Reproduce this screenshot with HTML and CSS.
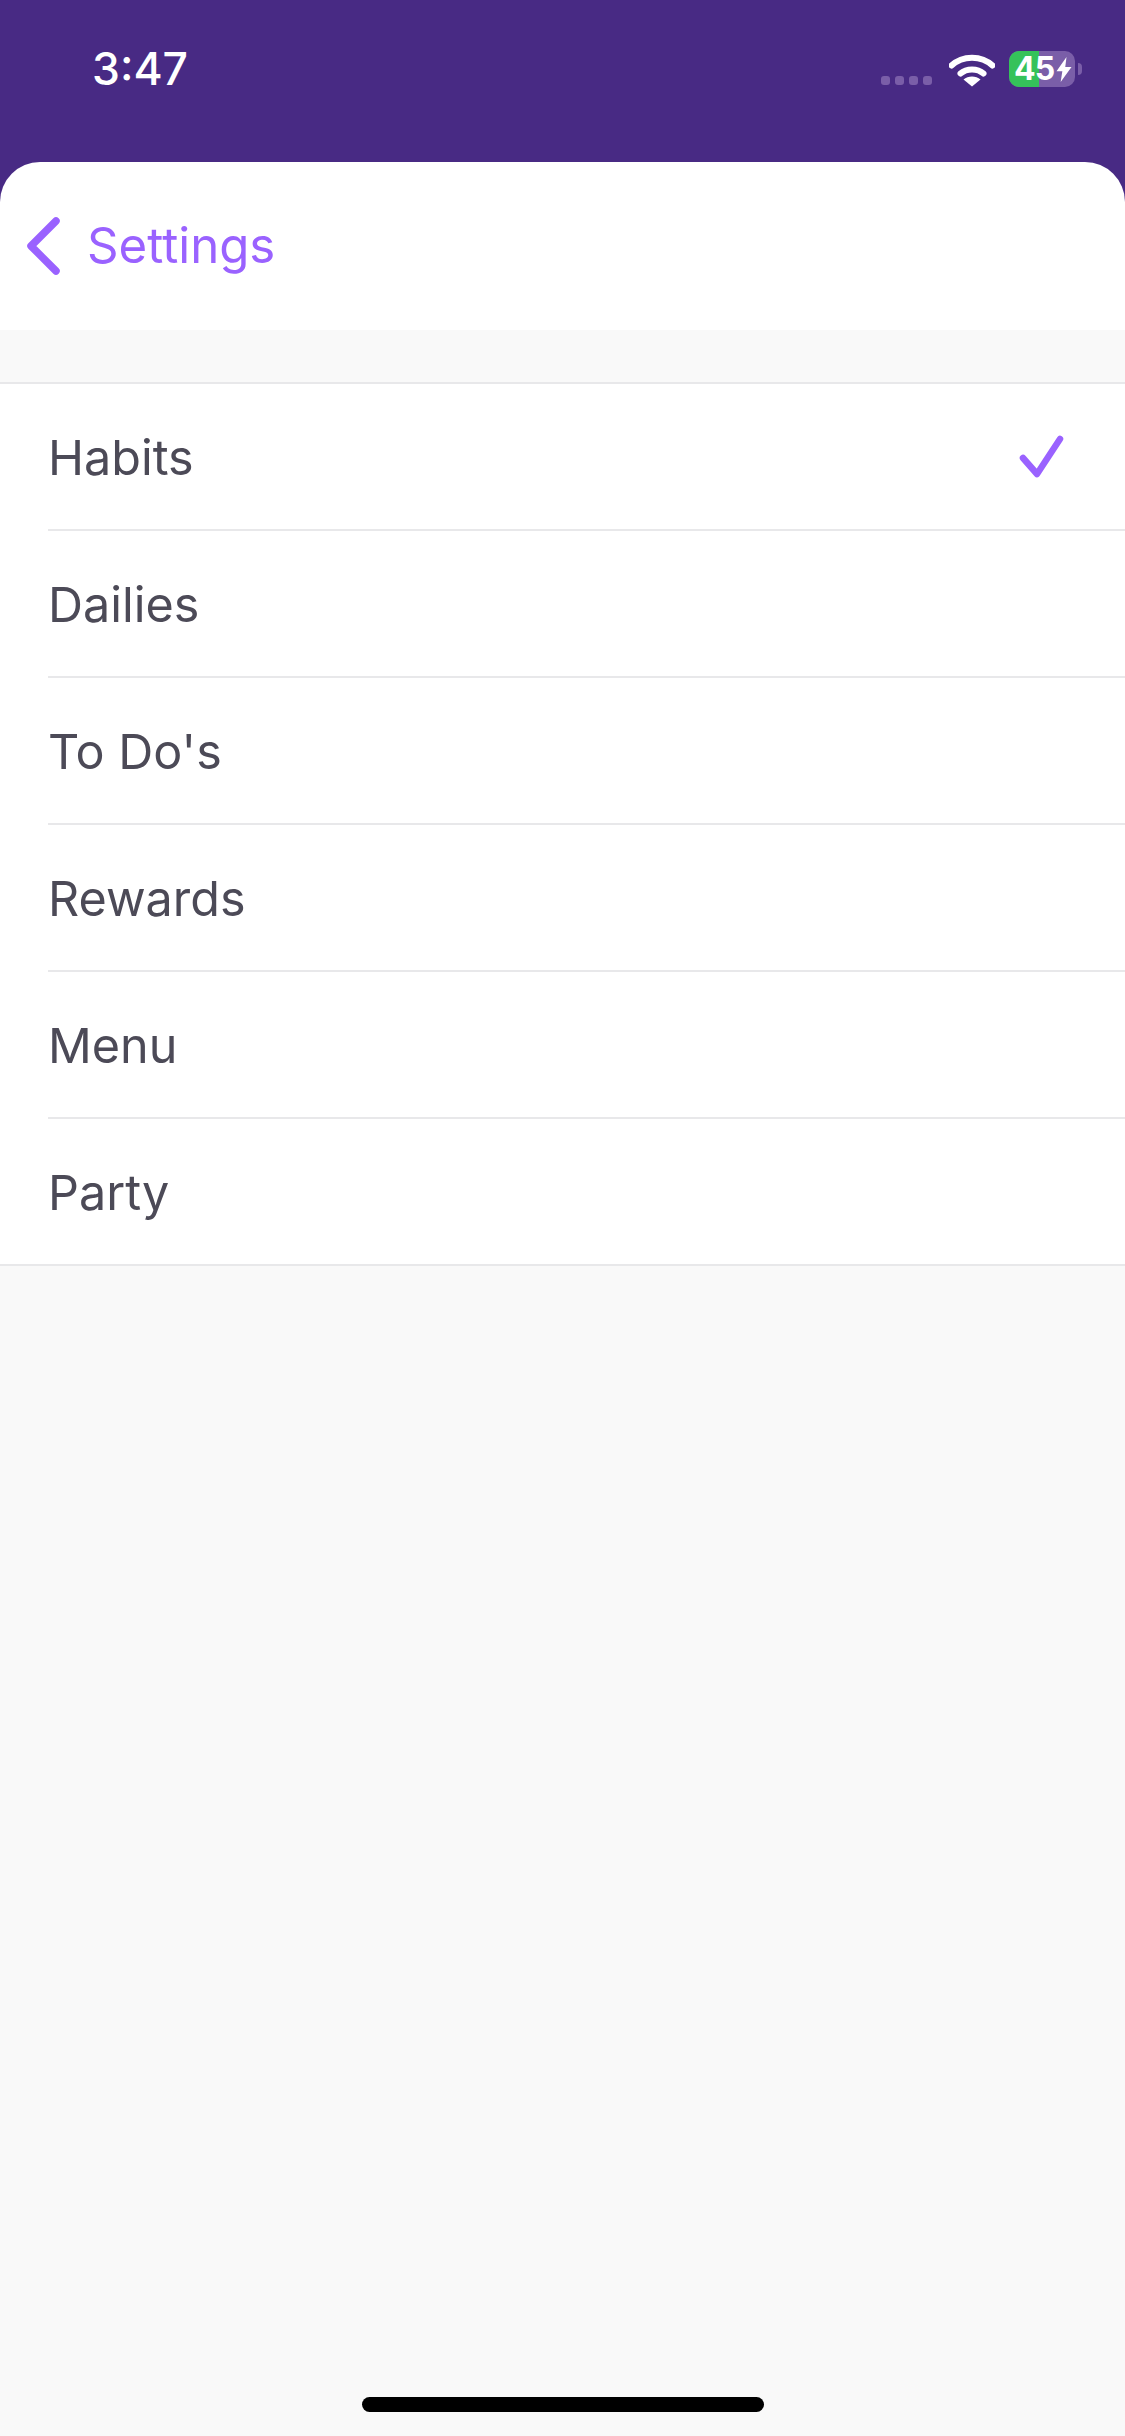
FILE: index.html
```html
<!DOCTYPE html>
<html lang="en">
<head>
    <meta charset="UTF-8">
    <meta name="viewport" content="width=device-width, initial-scale=1.0">
    <title>Launch Screen</title>
    <link rel="stylesheet" href="styles.css">
</head>
<body>
    <header class="top">
        <div class="status">
            <div class="time">3:47</div>
            <div class="status-right">
                <div class="signal">
                    <span></span><span></span><span></span><span></span>
                </div>
                <svg class="wifi" viewBox="0 0 46 34" width="46" height="34">
                    <path d="M2.5 12.5C13.5 2 32.5 2 43.5 12.5" fill="none" stroke="#fff" stroke-width="6" stroke-linecap="round"/>
                    <path d="M11.5 20.5C17.5 15 28.500 15 34.500 20.500" fill="none" stroke="#fff" stroke-width="6" stroke-linecap="round"/>
                    <path d="M23 33.500L14.500 26.500C19 22.500 27 22.500 31.500 26.500Z" fill="#fff"/>
                </svg>
                <div class="battery">
                    <div class="battery-fill"></div>
                    <span class="battery-text">45</span>
                    <svg class="bolt" viewBox="0 0 18 30" width="16" height="25">
                        <path d="M12 0L0 17H7L5 30L18 12H10.500Z" fill="#fff"/>
                    </svg>
                    <div class="battery-nub"></div>
                </div>
            </div>
        </div>
        <!-- Back bar -->
        <nav class="navbar">
            <svg class="back" viewBox="0 0 36 60" width="36" height="60">
                <path d="M31 5L6 30L31 55" fill="none" stroke="#9a62ff" stroke-width="7.500" stroke-linecap="round" stroke-linejoin="round"/>
            </svg>
            <span class="back-label">Settings</span>
        </nav>
    </header>

    <ul class="list">
        <li class="row">
            <div class="row-inner">
                <span class="row-label">Habits</span>
                <svg class="check" viewBox="0 0 48 48" width="48" height="48">
                    <path d="M6 25L20 41L43 6" fill="none" stroke="#9a62ff" stroke-width="6.500" stroke-linecap="round" stroke-linejoin="round"/>
                </svg>
            </div>
        </li>
        <li class="row"><div class="row-inner"><span class="row-label">Dailies</span></div></li>
        <li class="row"><div class="row-inner"><span class="row-label">To Do's</span></div></li>
        <li class="row"><div class="row-inner"><span class="row-label">Rewards</span></div></li>
        <li class="row"><div class="row-inner"><span class="row-label">Menu</span></div></li>
        <li class="row"><div class="row-inner"><span class="row-label">Party</span></div></li>
    </ul>

    <div class="home-bar"></div>
</body>
</html>
```

FILE: styles.css
```css
* {
  margin: 0;
  padding: 0;
  box-sizing: border-box;
}

body {
  width: 1125px;
  height: 2436px;
  display: flex;
  flex-direction: column;
  font-family: Inter, "Liberation Sans", sans-serif;
  background-color: #f9f9f9;
  overflow: hidden;
}

.top {
  background: linear-gradient(#482a84 0%, #482a84 80%, #452880 100%);
}

.status {
  height: 162px;
  display: flex;
  justify-content: space-between;
  padding: 45px 50px 0 92px;
}

.time {
  color: #fff;
  font-size: 44.500px;
  font-weight: 550;
  line-height: 49px;
}

.status-right {
  display: flex;
  align-items: flex-start;
}

.signal {
  display: flex;
  gap: 5px;
  margin-top: 31px;
  margin-right: 17px;
}

.signal span {
  width: 9px;
  height: 9px;
  border-radius: 3px;
  background-color: #7a5ea8;
}

.wifi {
  margin-top: 8px;
  margin-right: 14px;
}

.battery {
  position: relative;
  width: 66px;
  height: 36px;
  margin-top: 6px;
  display: flex;
  align-items: center;
  padding-left: 5px;
  border-radius: 10px;
  background-color: #7a5ea8;
  color: #fff;
}

.battery-fill {
  position: absolute;
  left: 0;
  top: 0;
  width: 30px;
  height: 36px;
  border-radius: 10px 0 0 10px;
  background-color: #35c25a;
}

.battery-text {
  position: relative;
  font-size: 32px;
  font-weight: 700;
  line-height: 36px;
  letter-spacing: -1px;
}

.bolt {
  position: relative;
  margin-left: 2px;
  flex-shrink: 0;
}

.battery-nub {
  position: absolute;
  left: 69px;
  top: 12px;
  width: 4px;
  height: 12px;
  border-radius: 0 4px 4px 0;
  background-color: #7a5ea8;
}

.navbar {
  height: 168px;
  display: flex;
  align-items: center;
  padding-left: 25px;
  background-color: #fff;
  border-radius: 40px 40px 0 0;
}

.back {
  margin-right: 26px;
}

.back-label {
  margin-bottom: 2px;
  color: #9a62ff;
  font-size: 49.200px;
}

.list {
  margin-top: 52px;
  list-style: none;
  background-color: #fff;
  border-top: 2px solid #e8e8ea;
  border-bottom: 2px solid #e8e8ea;
}

.row {
  padding-left: 48px;
}

.row-inner {
  height: 147px;
  display: flex;
  align-items: center;
  justify-content: space-between;
  padding-right: 60px;
  border-bottom: 2px solid #e8e8ea;
  color: #4c4a57;
  font-size: 48.500px;
}

.row-label {
  padding-top: 2px;
}

.row:last-child .row-inner {
  height: 145px;
  border-bottom: none;
}

.home-bar {
  width: 402px;
  height: 15px;
  margin: auto auto 24px;
  border-radius: 8px;
  background-color: #000;
}
```
